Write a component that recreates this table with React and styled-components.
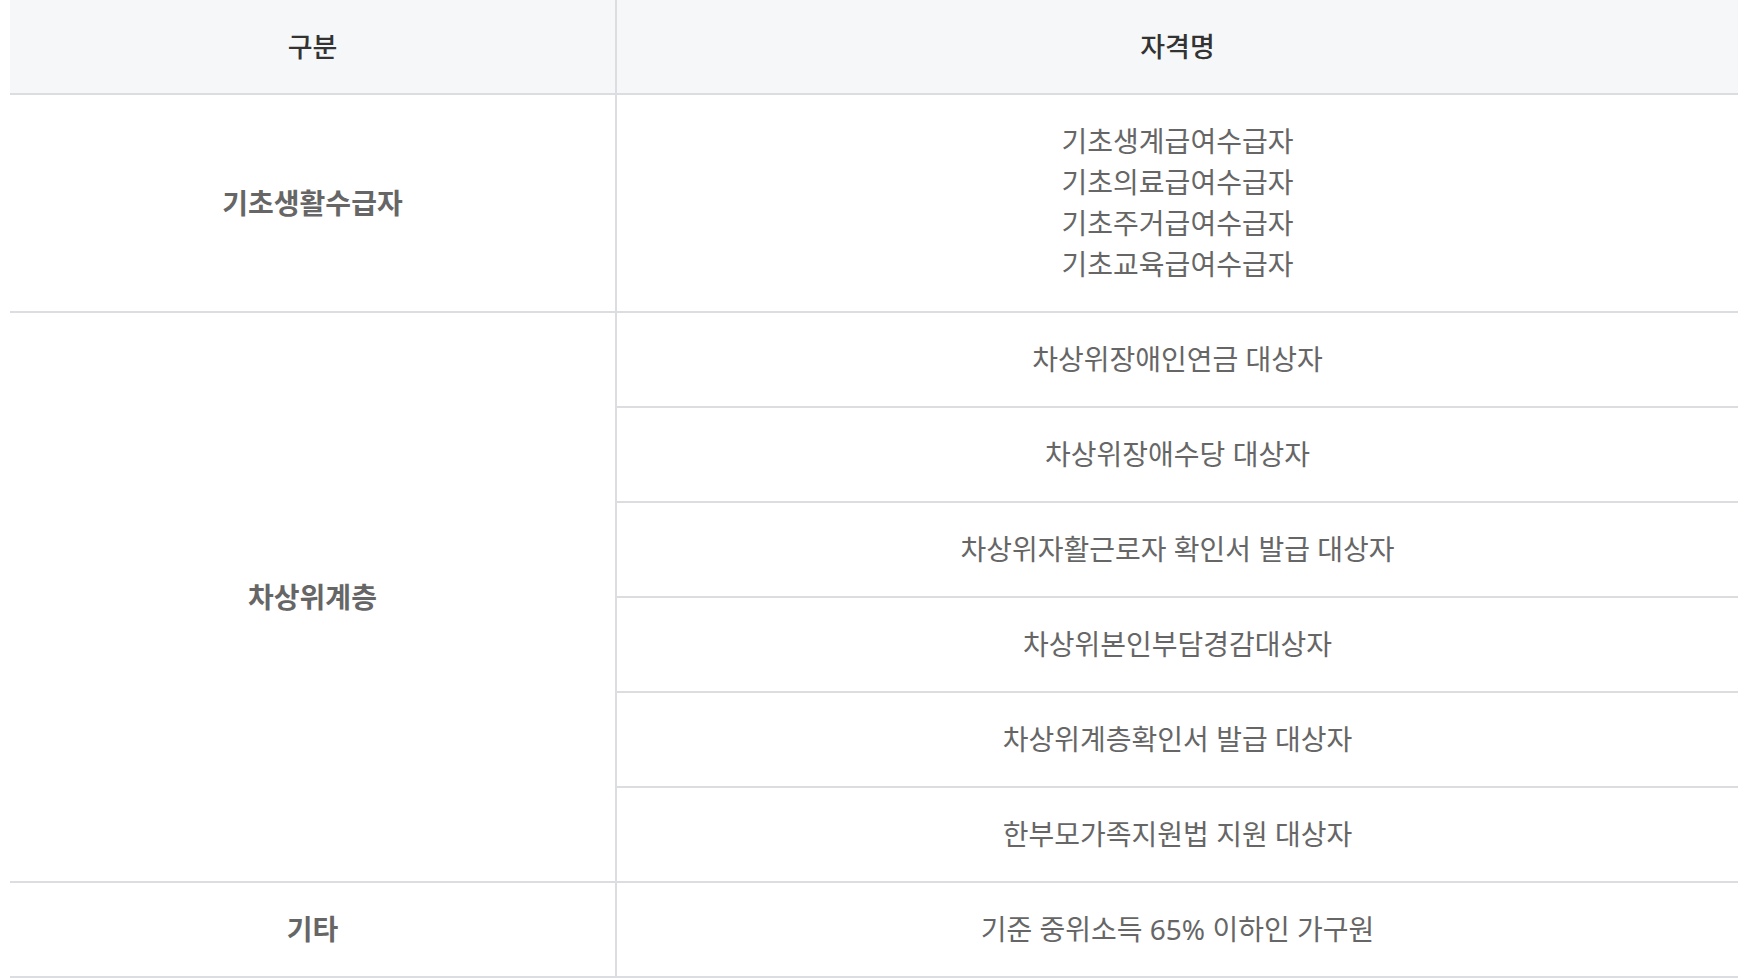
import React from 'react';
import styled, { createGlobalStyle } from 'styled-components';

const line = '#dcdde1';

const GlobalStyle = createGlobalStyle`
  html, body {
    margin: 0;
    padding: 0;
    background: #fff;
  }
  body {
    font-family: "Noto Sans", "Noto Sans CJK KR", sans-serif;
    -webkit-font-smoothing: antialiased;
  }
`

const Wrap = styled.div`
  padding: 0 16px 0 10px;
`

const Table = styled.table`
  width: 100%;
  border-collapse: collapse;
  table-layout: fixed;
  font-size: 28px;
  line-height: 41px;
  color: #666;
`

const Head = styled.th`
  height: 93px;
  padding: 0;
  background: #f6f7f9;
  color: #333;
  font-size: 27px;
  font-weight: 500;
  text-align: center;
  border-bottom: 2px solid ${line};
  border-right: ${p => p.divider ? `2px solid ${line}` : 'none'};
  width: ${p => p.width || 'auto'};
`

const Group = styled.th`
  padding: 26px 0;
  font-weight: 700;
  color: #666;
  text-align: center;
  vertical-align: middle;
  border-bottom: 2px solid ${line};
  border-right: 2px solid ${line};
`

const Cell = styled.td`
  padding: 26px 0;
  text-align: center;
  vertical-align: middle;
  border-bottom: 2px solid ${line};
`

const groups = [
  {
    name: '기초생활수급자',
    items: [
      ['기초생계급여수급자', '기초의료급여수급자', '기초주거급여수급자', '기초교육급여수급자'],
    ],
  },
  {
    name: '차상위계층',
    items: [
      ['차상위장애인연금 대상자'],
      ['차상위장애수당 대상자'],
      ['차상위자활근로자 확인서 발급 대상자'],
      ['차상위본인부담경감대상자'],
      ['차상위계층확인서 발급 대상자'],
      ['한부모가족지원법 지원 대상자'],
    ],
  },
  {
    name: '기타',
    items: [['기준 중위소득 65% 이하인 가구원']],
  },
]

export default function App() {
  return (
    <>
      <GlobalStyle />
      <Wrap>
        <Table>
          <thead>
            <tr>
              <Head divider width="605px">구분</Head>
              <Head>자격명</Head>
            </tr>
          </thead>
          <tbody>
            {groups.map(g =>
              g.items.map((lines, i) => (
                <tr key={g.name + i}>
                  {i === 0 && <Group rowSpan={g.items.length}>{g.name}</Group>}
                  <Cell>
                    {lines.map(t => <div key={t}>{t}</div>)}
                  </Cell>
                </tr>
              ))
            )}
          </tbody>
        </Table>
      </Wrap>
    </>
  )
}
